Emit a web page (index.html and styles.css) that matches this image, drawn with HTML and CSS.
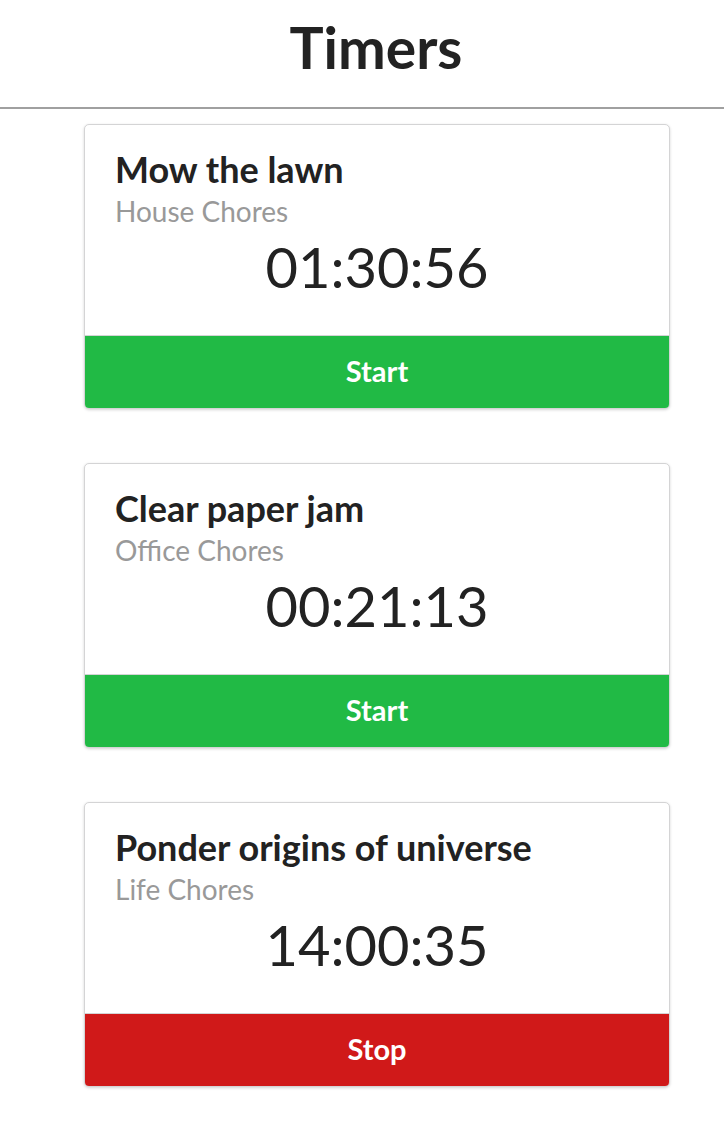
FILE: index.html
```html
<!DOCTYPE html>
<html>
<head>
<meta charset="utf-8">
<link rel="stylesheet" href="styles.css">
</head>
<body>
<div class="page">
<header class="top">
  <h1 class="title">Timers</h1>
</header>
<main class="list">
  <div class="card">
    <div class="content">
      <div class="name">Mow the lawn</div>
      <div class="meta">House Chores</div>
      <div class="time">01:30:56</div>
    </div>
    <button class="btn start">Start</button>
  </div>
  <div class="card">
    <div class="content">
      <div class="name">Clear paper jam</div>
      <div class="meta">Office Chores</div>
      <div class="time">00:21:13</div>
    </div>
    <button class="btn start">Start</button>
  </div>
  <div class="card">
    <div class="content">
      <div class="name">Ponder origins of universe</div>
      <div class="meta">Life Chores</div>
      <div class="time">14:00:35</div>
    </div>
    <button class="btn stop">Stop</button>
  </div>
</main>
</div>
</body>
</html>
```
FILE: styles.css
```css
html, body {
  margin: 0;
  padding: 0;
  background: #fff;
  font-family: Lato, "Helvetica Neue", Arial, sans-serif;
  color: #222;
  overflow: hidden;
}
.page {
  width: 752px;
}
.top {
  height: 107px;
  border-bottom: 2px solid #a0a0a0;
  display: flex;
  align-items: center;
  justify-content: center;
}
.title {
  margin: 0;
  font-size: 57px;
  font-weight: 700;
  line-height: 1;
  color: #222;
  padding-bottom: 12px;
}
.list {
  padding: 15px 84px 40px;
  display: flex;
  flex-direction: column;
  gap: 54px;
}
.card {
  width: 584px;
  border: 1px solid #d4d4d5;
  border-radius: 5px;
  box-shadow: 0 1px 3px 0 #d4d4d5;
  background: #fff;
  display: flex;
  flex-direction: column;
  overflow: hidden;
}
.content {
  height: 210px;
  padding: 22px 30px 0;
  box-sizing: border-box;
  display: flex;
  flex-direction: column;
}
.name {
  font-size: 36px;
  font-weight: 700;
  line-height: 44px;
  color: #222;
}
.meta {
  font-size: 28px;
  line-height: 40px;
  color: #999;
}
.time {
  text-align: center;
  font-size: 56px;
  line-height: 72px;
  color: #222;
}
.btn {
  display: block;
  width: 100%;
  height: 73px;
  border: 0;
  border-top: 1px solid #d4d4d5;
  margin: 0;
  padding: 0 0 4px;
  font-family: Lato, Arial, sans-serif;
  font-weight: 700;
  font-size: 29px;
  color: #fff;
  cursor: pointer;
}
.start { background: #21ba45; }
.stop { background: #d01919; }
```
